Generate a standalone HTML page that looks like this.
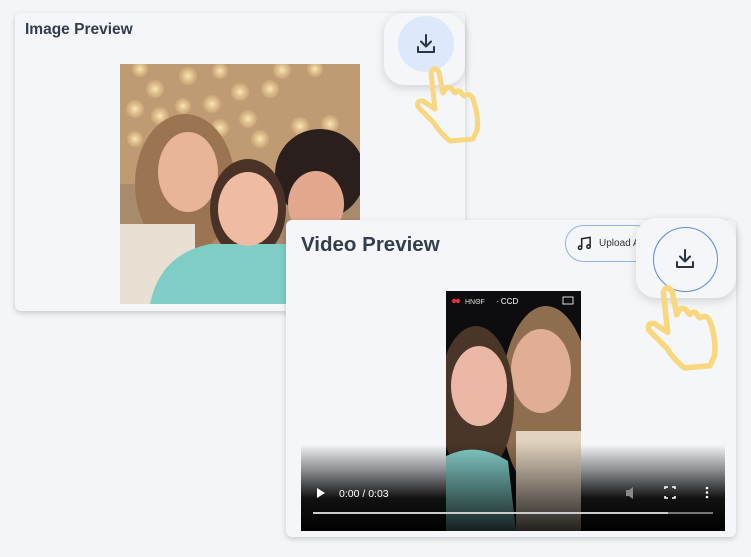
<!DOCTYPE html>
<html><head><meta charset="utf-8"><style>
*{margin:0;padding:0;box-sizing:border-box}
body{width:751px;height:557px;background:#f3f5f8;position:relative;overflow:hidden;font-family:"Liberation Sans",sans-serif}
.card{position:absolute;background:#f5f6f9;border-radius:6px;box-shadow:0 2px 6px rgba(0,0,0,.18)}
.t{position:absolute;font-weight:bold;color:#333d4d}
.btn{position:absolute;background:#f4f6fa;border-radius:20px;box-shadow:0 3px 10px rgba(0,0,0,.15)}
</style></head><body>

<div class="card" style="left:15px;top:13px;width:450px;height:298px"></div>
<div class="t" style="left:25px;top:21px;font-size:15.5px">Image Preview</div>
<svg style="position:absolute;left:120px;top:64px" width="240" height="240" viewBox="0 0 240 240">
<defs><radialGradient id="bk"><stop offset="0" stop-color="#fbe7b8"/><stop offset="1" stop-color="#f2cf8f" stop-opacity=".2"/></radialGradient></defs>
<rect width="240" height="240" fill="#a88a6c"/>
<rect width="240" height="120" fill="#bf9b74"/>
<g fill="url(#bk)">
<circle cx="20" cy="5" r="8"/><circle cx="35" cy="25" r="9"/><circle cx="68" cy="12" r="9"/><circle cx="100" cy="7" r="8"/><circle cx="120" cy="28" r="9"/><circle cx="150" cy="25" r="9"/><circle cx="162" cy="6" r="9"/><circle cx="195" cy="5" r="8"/>
<circle cx="15" cy="45" r="9"/><circle cx="40" cy="52" r="9"/><circle cx="63" cy="42" r="8"/><circle cx="92" cy="40" r="9"/><circle cx="128" cy="55" r="9"/><circle cx="180" cy="62" r="9"/><circle cx="210" cy="60" r="9"/><circle cx="100" cy="64" r="9"/><circle cx="15" cy="75" r="8"/><circle cx="140" cy="75" r="9"/>
</g>
<ellipse cx="65" cy="120" rx="50" ry="70" fill="#9b7452"/>
<rect x="0" y="160" width="75" height="80" fill="#e9e0d3"/>
<ellipse cx="68" cy="108" rx="30" ry="40" fill="#e8b598"/>
<ellipse cx="200" cy="110" rx="45" ry="45" fill="#2a1f1c"/>
<ellipse cx="196" cy="140" rx="28" ry="33" fill="#e2a88e"/>
<ellipse cx="128" cy="145" rx="38" ry="50" fill="#4a3326"/>
<path d="M30 240 Q40 190 90 180 L170 180 L170 240Z" fill="#7fcdc5"/>
<ellipse cx="128" cy="145" rx="30" ry="37" fill="#efbca3"/>
</svg>
<div class="btn" style="left:384px;top:13px;width:81px;height:72px"></div>
<div style="position:absolute;left:398px;top:16px;width:56px;height:56px;border-radius:50%;background:#dde8fb"></div>
<svg style="position:absolute;left:414px;top:32px" width="24" height="24" viewBox="0 0 24 24" fill="none" stroke="#2b3440" stroke-width="2" stroke-linecap="round" stroke-linejoin="round"><path d="M12 3v11M7 9.5l5 5 5-5M4 15v5h16v-5"/></svg>
<svg style="position:absolute;left:410px;top:60px" width="90" height="90" viewBox="0 0 90 90" fill="none" stroke="#f8d77f" stroke-width="5" stroke-linejoin="round"><path d="M21 13Q24 5 29 12L33 33L36 28Q41 26 43 31L45 33Q49 28 52 34L54 36Q60 32 63 39Q69 56 67 70L63 79L40 81Q30 73 24 63L8 47Q6 40 13 41L25 49Z"/></svg>

<div class="card" style="left:286px;top:220px;width:450px;height:317px;background:#f5f6f9"></div>
<div class="t" style="left:301px;top:233px;font-size:20.5px">Video Preview</div>
<div style="position:absolute;left:565px;top:225px;width:90px;height:37px;border:1px solid #8fb2ea;border-radius:19px"></div>
<svg style="position:absolute;left:577px;top:236px" width="15" height="15" viewBox="0 0 16 16" fill="none" stroke="#222" stroke-width="1.6"><path d="M5 12V3l9-1.5V11"/><circle cx="3.3" cy="12.5" r="1.8"/><circle cx="12.3" cy="11.3" r="1.8"/></svg>
<div style="position:absolute;left:599px;top:238px;font-size:10px;color:#333;width:50px;white-space:nowrap">Upload A</div>
<div class="btn" style="left:636px;top:218px;width:100px;height:80px"></div>
<div style="position:absolute;left:653px;top:227px;width:65px;height:65px;border-radius:50%;border:1.2px solid #5a8ce0"></div>
<svg style="position:absolute;left:673px;top:247px" width="24" height="24" viewBox="0 0 24 24" fill="none" stroke="#2b3440" stroke-width="2" stroke-linecap="round" stroke-linejoin="round"><path d="M12 3v11M7 9.5l5 5 5-5M4 15v5h16v-5"/></svg>

<div style="position:absolute;left:301px;top:445px;width:424px;height:86px;background:linear-gradient(#f3f4f7,#888a8e 30%,#111 62%,#000)"></div>
<svg style="position:absolute;left:446px;top:291px" width="135" height="240" viewBox="0 0 135 240">
<defs><linearGradient id="vg" x1="0" y1="0" x2="0" y2="1"><stop offset="0" stop-color="#000" stop-opacity="0"/><stop offset="1" stop-color="#000" stop-opacity=".85"/></linearGradient></defs>
<rect width="135" height="240" fill="#0d0c0e"/>
<ellipse cx="100" cy="110" rx="45" ry="95" fill="#8f6e4f"/>
<rect x="70" y="140" width="65" height="100" fill="#e2d3bf"/>
<ellipse cx="95" cy="80" rx="30" ry="42" fill="#e0ad95"/>
<ellipse cx="30" cy="110" rx="38" ry="75" fill="#4a3529"/>
<path d="M0 240 L0 165 Q30 150 62 170 L70 240Z" fill="#86d0cc"/>
<ellipse cx="33" cy="95" rx="28" ry="40" fill="#eab8a5"/>
<rect y="150" width="135" height="90" fill="url(#vg)"/>
<circle cx="8" cy="10" r="2.2" fill="#d33"/><circle cx="12" cy="10" r="2.2" fill="#d33"/>
<text x="19" y="13" font-size="7" fill="#ddd" font-family="Liberation Sans">HNΘF</text>
<text x="50" y="13" font-size="8" fill="#fff" font-family="Liberation Sans">· CCD</text>
<rect x="117" y="6" width="10" height="7" fill="none" stroke="#ddd" stroke-width="1"/>
</svg>
<svg style="position:absolute;left:301px;top:480px" width="424" height="51">
<path d="M16 8l8 5-8 5z" fill="#fff"/>
<text x="38" y="17" font-size="10.5" fill="#fff" font-family="Liberation Sans">0:00 / 0:03</text>
<path d="M325 10h3l4-3v12l-4-3h-3z" fill="#888"/>
<path d="M364 9v-2h3M371 7h3v2M374 16v2h-3M367 18h-3v-2" stroke="#fff" stroke-width="1.6" fill="none"/>
<circle cx="406" cy="8" r="1.3" fill="#fff"/><circle cx="406" cy="12.5" r="1.3" fill="#fff"/><circle cx="406" cy="17" r="1.3" fill="#fff"/>
<rect x="12" y="32" width="400" height="2" fill="#777"/><rect x="12" y="32" width="355" height="2" fill="#ccc"/>
</svg>
<svg style="position:absolute;left:640px;top:278px" width="100" height="100" viewBox="0 0 90 90" fill="none" stroke="#f8d77f" stroke-width="5" stroke-linejoin="round"><path d="M21 13Q24 5 29 12L33 33L36 28Q41 26 43 31L45 33Q49 28 52 34L54 36Q60 32 63 39Q69 56 67 70L63 79L40 81Q30 73 24 63L8 47Q6 40 13 41L25 49Z"/></svg>
</body></html>
